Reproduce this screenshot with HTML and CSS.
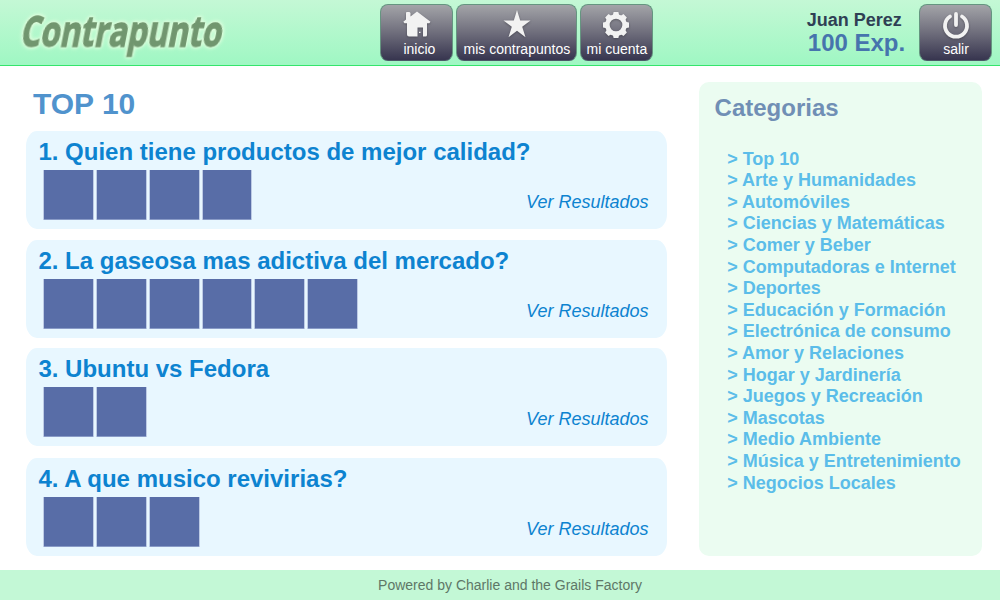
FILE: index.html
```html
<!DOCTYPE html>
<html lang="es">
<head>
<meta charset="utf-8">
<title>Contrapunto</title>
<link rel="stylesheet" href="styles.css">
</head>
<body>
<header class="header">
  <svg class="logo" width="230" height="65" viewBox="0 0 230 65"><text transform="translate(19.5 46.5) skewX(-11)" textLength="201" lengthAdjust="spacingAndGlyphs">Contrapunto</text></svg>
  <nav class="nav">
    <a class="button home">
      <svg class="icon" width="30" height="30" viewBox="0 0 30 30"><path fill-rule="evenodd" d="M15 .5 28.5 10.8 27.3 12.3H25V24Q25 25.5 23.5 25.5H21V16.5H15.5V25.5H7Q5 25.5 5 23.5V12.3H2.5L1.3 10.8 4 8.5V1.7Q4 1 5 1H7.5L8.5 2V5.6ZM17 20.8V22H18.5V20.8Z"/></svg>
      <span>inicio</span>
    </a>
    <a class="button wide">
      <svg class="icon" width="30" height="30" viewBox="0 0 30 30"><path d="M15-1 18.2 9.4H28.5L20.2 15.8 23.5 26.2 15 19.8 6.5 26.2 9.8 15.8 1.5 9.4H11.8Z"/></svg>
      <span>mis contrapuntos</span>
    </a>
    <a class="button">
      <svg class="icon" width="30" height="30" viewBox="0 0 30 30"><g transform="translate(14 14)"><circle r="8.6" fill="none" stroke="#f2f2f2" stroke-width="4.5"/><g id="teeth"><path d="M-3.2-9.5-2.4-13H2.4L3.2-9.5ZM-3.2 9.5-2.4 13H2.4L3.2 9.5ZM-9.5-3.2-13-2.4V2.4L-9.5 3.2ZM9.5-3.2 13-2.4V2.4L9.5 3.2Z"/></g><use href="#teeth" transform="rotate(45)"/></g></svg>
      <span>mi cuenta</span>
    </a>
  </nav>
  <div class="user"><div class="name">Juan Perez</div><div class="points">100 Exp.</div></div>
  <a class="button logout">
    <svg class="icon" width="30" height="30" viewBox="0 0 30 30"><path class="power" d="M9 5.5A11 11 0 1 0 21 5.5M15 3V14"/></svg>
    <span>salir</span>
  </a>
</header>
<div class="content">
  <main class="main">
    <h1>TOP 10</h1>
    <section class="card"><h2>1. Quien tiene productos de mejor calidad?</h2><div class="row"><div class="tiles"><i></i><i></i><i></i><i></i></div><a>Ver Resultados</a></div></section>
    <section class="card second"><h2>2. La gaseosa mas adictiva del mercado?</h2><div class="row"><div class="tiles"><i></i><i></i><i></i><i></i><i></i><i></i></div><a>Ver Resultados</a></div></section>
    <section class="card third"><h2>3. Ubuntu vs Fedora</h2><div class="row"><div class="tiles"><i></i><i></i></div><a>Ver Resultados</a></div></section>
    <section class="card fourth"><h2>4. A que musico revivirias?</h2><div class="row"><div class="tiles"><i></i><i></i><i></i></div><a>Ver Resultados</a></div></section>
  </main>
  <aside class="sidebar">
    <h3>Categorias</h3>
    <ul>
      <li>&gt; Top 10</li>
      <li>&gt; Arte y Humanidades</li>
      <li>&gt; Automóviles</li>
      <li>&gt; Ciencias y Matemáticas</li>
      <li>&gt; Comer y Beber</li>
      <li>&gt; Computadoras e Internet</li>
      <li>&gt; Deportes</li>
      <li>&gt; Educación y Formación</li>
      <li>&gt; Electrónica de consumo</li>
      <li>&gt; Amor y Relaciones</li>
      <li>&gt; Hogar y Jardinería</li>
      <li>&gt; Juegos y Recreación</li>
      <li>&gt; Mascotas</li>
      <li>&gt; Medio Ambiente</li>
      <li>&gt; Música y Entretenimiento</li>
      <li>&gt; Negocios Locales</li>
    </ul>
  </aside>
</div>
<footer class="footer">Powered by Charlie and the Grails Factory</footer>
</body>
</html>
```
FILE: styles.css
```css
* { box-sizing: border-box; }
body {
  margin: 0;
  height: 600px;
  display: flex;
  flex-direction: column;
  overflow: hidden;
  background: #fff;
  font-family: "Liberation Sans", Arial, sans-serif;
}
h1, h2, h3, ul { margin: 0; padding: 0; }
.header {
  flex: none;
  display: flex;
  height: 66px;
  border-bottom: 1px solid #35e56c;
  background: linear-gradient(#c4f8d5, #9ff7c3);
}
.logo { flex: none; width: 230px; margin-right: 150.4px; overflow: visible; }
.logo text {
  font-family: "Open Sans", "Noto Sans", sans-serif;
  font-size: 43px;
  font-weight: 700;
  fill: #71966f;
  stroke: #71966f;
  stroke-width: 1.3px;
  filter: drop-shadow(0 0 2px #e4ffdf) drop-shadow(0 0 1px #e4ffdf);
}
.nav { display: flex; gap: 3px; padding-top: 4px; width: 273.6px; }
.button {
  display: flex;
  flex-direction: column;
  align-items: center;
  flex: none;
  width: 73px;
  height: 57.4px;
  padding-top: 6px;
  border: 1px solid #659580;
  border-bottom-color: #4c5968;
  border-radius: 8px;
  background: linear-gradient(#a3a4a8, #6f6e7c 50%, #37354f);
  color: #fff;
  font-size: 14px;
  line-height: 16px;
}
.wide { width: 121px; }
.home span { padding-left: 5px; }
.icon { flex: none; overflow: visible; fill: #f2f2f2; filter: drop-shadow(0 1px 1px #33333a88); }
.power { fill: none; stroke: #f2f2f2; stroke-width: 3.8; stroke-linecap: round; }
.user { width: 265.5px; padding: 10px 0 0 152.8px; color: #2f4054; font-weight: bold; }
.name { font-size: 18px; line-height: 20px; }
.points { font-size: 24px; line-height: 25px; color: #4674ad; padding-left: 1px; }
.logout { margin-top: 4px; }
.content { display: flex; flex: 1; }
.main { width: 641px; margin: 22px 32px 0 26px; }
h1 { height: 43px; padding-left: 7px; font-size: 30px; line-height: 32px; color: #5093cd; }
.card { height: 98px; padding: 7px 18.5px 0 12.4px; border-radius: 11px / 15px; background: #e8f7ff; }
.second { margin-top: 11px; }
.third { margin-top: 10px; }
.fourth { margin-top: 12px; }
.card h2 { font-size: 24px; line-height: 27px; height: 32px; color: #0d83d0; }
.row { display: flex; justify-content: space-between; padding-left: 4.6px; }
.row a { padding-top: 22px; font-size: 18px; line-height: 20px; font-style: italic; color: #0d83d0; }
.tiles { display: flex; gap: 2px; }
.tiles i {
  width: 50.88px;
  height: 50px;
  border: solid #bdcbe5;
  border-width: 0 1px;
  background: #586da7;
  box-shadow: inset 0 -1px #899bc7;
}
.sidebar { width: 283px; height: 474px; margin-top: 16px; padding: 12px 0 0 15.6px; border-radius: 10px; background: #ebfcf1; }
h3 { font-size: 24px; line-height: 28px; color: #708fb5; }
.sidebar ul { list-style: none; padding: 26.6px 0 0 12.6px; font-size: 18px; font-weight: bold; line-height: 21.6px; color: #5bbde9; }
.footer { height: 30px; background: #c3f8d6; color: #5e7767; text-align: center; font-size: 14px; line-height: 30px; padding-left: 20px; }
```
